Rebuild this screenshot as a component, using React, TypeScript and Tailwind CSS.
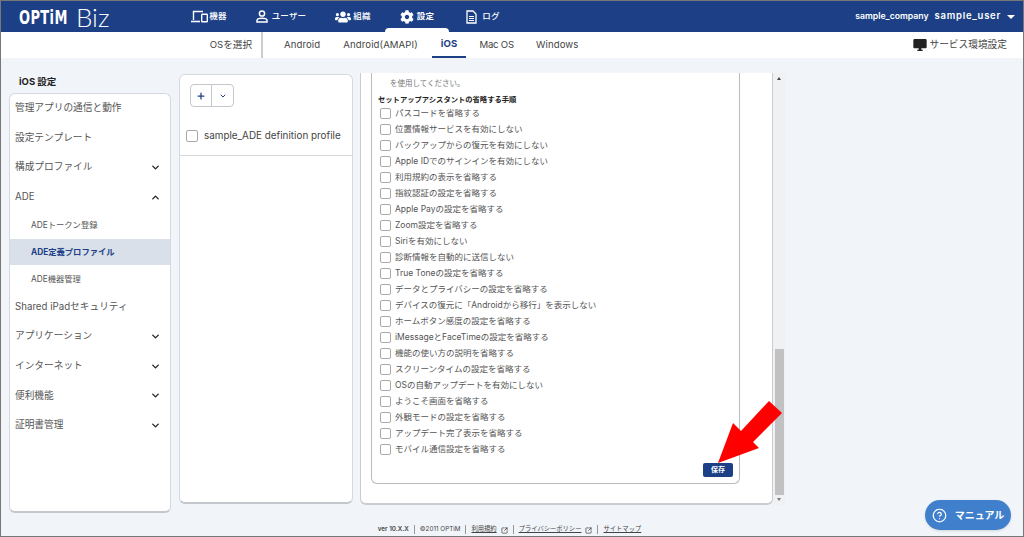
import { ChevronDown, ChevronUp, CircleHelp, Plus, SquareArrowOutUpRight } from 'lucide-react';
import { FaCog, FaUsers } from 'react-icons/fa';
import { MdDesktopWindows } from 'react-icons/md';

const font = '[font-family:Inter,"Noto_Sans_CJK_JP",sans-serif]';

function DeviceIcon() {
  return (
    <svg width="17" height="13" viewBox="0 0 17 13" fill="none" stroke="white">
      <path d="M2.5 10V1.5H12" strokeWidth="1.4" />
      <path d="M0 11.5H9" strokeWidth="1.6" />
      <rect x="10.7" y="4.2" width="5.6" height="7.6" rx="0.6" strokeWidth="1.4" />
    </svg>
  );
}

function UserIcon() {
  return (
    <svg width="12" height="13" viewBox="0 0 12 13" fill="none" stroke="white" strokeWidth="1.5">
      <circle cx="6" cy="3.5" r="2.6" />
      <path d="M1 12V10.5C1 9 2.5 8.3 6 8.3C9.5 8.3 11 9 11 10.5V12Z" />
    </svg>
  );
}

function LogIcon() {
  return (
    <svg width="11" height="14" viewBox="0 0 11 14" fill="none" stroke="white" strokeWidth="1.3">
      <path d="M1 1H7L10 4V13H1Z" />
      <path d="M3 6.5H8M3 8.5H8M3 10.5H8" strokeWidth="1" />
    </svg>
  );
}

function NavItem({ icon, label, active, className }: { icon: React.ReactNode; label: string; active?: boolean; className: string }) {
  return (
    <div className={`relative flex h-[31px] items-center justify-center ${className}`}>
      {icon}
      <span className={`text-[8.5px] tracking-[0.2px] text-white ${active ? 'font-bold' : 'font-medium'}`}>{label}</span>
      {active && <div className="absolute bottom-0 left-0 right-0 h-[4px] rounded-t-[4px] bg-white" />}
    </div>
  );
}

function Header() {
  return (
    <div className="flex h-[31px] shrink-0 items-center bg-[#1c3f86]">
      <div className="flex w-[176px] items-center pl-[18px]">
        <span className="w-[57px] origin-left scale-x-[0.65] text-[20px] font-bold leading-none tracking-[0.6px] text-white [font-family:'DejaVu_Sans']">OPTiM</span>
        <span className="text-[26px] font-light leading-none text-white [font-family:Lato,sans-serif]">Biz</span>
      </div>
      <NavItem className="w-[64px] gap-[1px]" icon={<DeviceIcon />} label="機器" />
      <NavItem className="w-[80px] gap-[4px]" icon={<UserIcon />} label="ユーザー" />
      <NavItem className="w-[64px] gap-[2px]" icon={<FaUsers className="h-[14px] w-[16px] text-white" />} label="組織" />
      <NavItem className="w-[64px] gap-[3px]" icon={<FaCog className="h-[14px] w-[14px] text-white" />} label="設定" active />
      <NavItem className="w-[68px] gap-[5px]" icon={<LogIcon />} label="ログ" />
      <div className="ml-auto flex items-center gap-[6px] pr-[8px] font-semibold text-white">
        <span className="text-[8.7px]">sample_company</span>
        <span className="text-[9.5px] tracking-[0.75px]">sample_user</span>
        <span className="h-0 w-0 border-x-[4px] border-t-[4px] border-x-transparent border-t-white" />
      </div>
    </div>
  );
}

function SubNav() {
  return (
    <div className="flex h-[26px] shrink-0 items-stretch bg-white text-[9.6px] text-[#444]">
      <div className="flex w-[260px] items-center justify-end pr-[9px]">OSを選択</div>
      <div className="w-[2px] bg-[#ccc]" />
      <div className="flex pl-[12px]">
        <div className="mr-[5px] flex items-center px-[9px] tracking-[0.1px]">Android</div>
        <div className="mr-[5px] flex items-center px-[9px] tracking-[0.1px]">Android(AMAPI)</div>
        <div className="mr-[4px] flex items-center border-b-2 border-[#1c3f86] px-[9px] font-bold tracking-[0.1px] text-[#1c3f86]">iOS</div>
        <div className="mr-[4px] flex items-center px-[9px] tracking-[-0.2px]">Mac OS</div>
        <div className="mr-[5px] flex items-center px-[9px] tracking-[0.1px]">Windows</div>
      </div>
      <div className="ml-auto flex items-center gap-[2px] pr-[16px]">
        <MdDesktopWindows className="h-[16px] w-[16px] text-[#222]" />
        <span className="text-[9.7px]">サービス環境設定</span>
      </div>
    </div>
  );
}

function SideRow({ label, open }: { label: string; open?: boolean }) {
  return (
    <div className="flex h-[29.6px] items-center justify-between pl-[5px] pr-[9px] text-[9.7px] text-[#555]">
      <span>{label}</span>
      {open === true && <ChevronUp className="h-[11px] w-[11px] text-[#222]" strokeWidth={3} />}
      {open === false && <ChevronDown className="h-[11px] w-[11px] text-[#222]" strokeWidth={3} />}
    </div>
  );
}

function SubRow({ label, active }: { label: string; active?: boolean }) {
  return (
    <div className={`flex h-[26.8px] items-center pl-[21px] text-[8.3px] ${active ? 'bg-[#d9e0ea] font-bold text-[#1c3f86]' : 'text-[#555]'}`}>
      {label}
    </div>
  );
}

function Sidebar() {
  return (
    <div className="flex w-[162px] shrink-0 flex-col">
      <div className="flex h-[34.5px] shrink-0 items-end pb-[3px] pl-[10px] text-[9.5px] font-bold text-[#222]">iOS 設定</div>
      <div className="h-[420px] shrink-0 rounded-[6px] border border-b-2 border-[#d5d8dd] border-b-[#c4c8cd] bg-white">
        <SideRow label="管理アプリの通信と動作" />
        <SideRow label="設定テンプレート" />
        <SideRow label="構成プロファイル" open={false} />
        <SideRow label="ADE" open />
        <SubRow label="ADEトークン登録" />
        <SubRow label="ADE定義プロファイル" active />
        <SubRow label="ADE機器管理" />
        <SideRow label="Shared iPadセキュリティ" />
        <SideRow label="アプリケーション" open={false} />
        <SideRow label="インターネット" open={false} />
        <SideRow label="便利機能" open={false} />
        <SideRow label="証明書管理" open={false} />
      </div>
    </div>
  );
}

function ProfileList() {
  return (
    <div className="ml-[8px] mt-[16px] h-[430px] w-[174px] shrink-0 rounded-[6px] border border-b-2 border-[#d5d8dd] border-b-[#c4c8cd] bg-white">
      <div className="flex h-[81px] flex-col justify-between border-b border-[#d5d8dd] pb-[12px] pl-[6px] pt-[9px]">
        <div className="ml-[4px] flex h-[23px] w-[44px] rounded-[4px] border border-[#c4c8cd]">
          <div className="flex w-[21px] items-center justify-center border-r border-[#c4c8cd]">
            <Plus className="h-[10px] w-[10px] text-[#1c3f86]" strokeWidth={3} />
          </div>
          <div className="flex flex-1 items-center justify-center">
            <ChevronDown className="h-[8px] w-[8px] text-[#1c3f86]" strokeWidth={3} />
          </div>
        </div>
        <div className="flex items-center gap-[6px]">
          <span className="h-[12px] w-[12px] rounded-[2px] border border-[#aaa]" />
          <span className="text-[9.9px] text-[#444]">sample_ADE definition profile</span>
        </div>
      </div>
    </div>
  );
}

const skipItems = [
  'パスコードを省略する',
  '位置情報サービスを有効にしない',
  'バックアップからの復元を有効にしない',
  'Apple IDでのサインインを有効にしない',
  '利用規約の表示を省略する',
  '指紋認証の設定を省略する',
  'Apple Payの設定を省略する',
  'Zoom設定を省略する',
  'Siriを有効にしない',
  '診断情報を自動的に送信しない',
  'True Toneの設定を省略する',
  'データとプライバシーの設定を省略する',
  'デバイスの復元に「Androidから移行」を表示しない',
  'ホームボタン感度の設定を省略する',
  'iMessageとFaceTimeの設定を省略する',
  '機能の使い方の説明を省略する',
  'スクリーンタイムの設定を省略する',
  'OSの自動アップデートを有効にしない',
  'ようこそ画面を省略する',
  '外観モードの設定を省略する',
  'アップデート完了表示を省略する',
  'モバイル通信設定を省略する',
];

function DetailPanel() {
  return (
    <div className="ml-[7px] mt-[15px] flex h-[432px] shrink-0">
      <div className="h-full w-[413px] rounded-b-[6px] border-x border-b-2 border-[#c9ccd1] bg-white pl-[10px] pr-[32px]">
        <div className="h-[411px] rounded-b-[6px] border-x border-b border-[#bbb] pl-[6px]">
          <div className="pl-[12px] pt-[6px] text-[7.5px] leading-[10px] text-[#777]">を使用してください。</div>
          <div className="mt-[6px] text-[7.3px] font-bold leading-[10px] text-[#222]">セットアップアシスタントの省略する手順</div>
          <div>
            {skipItems.map((item) => (
              <div key={item} className="flex h-[16px] items-center gap-[4px] pl-[2px] text-[8.5px] text-[#555]">
                <span className="h-[11px] w-[11px] shrink-0 rounded-[2px] border border-[#aaa]" />
                <span>{item}</span>
              </div>
            ))}
          </div>
          <div className="mr-[6px] mt-[6px] flex justify-end">
            <div className="flex h-[14px] w-[30px] items-center justify-center rounded-[2px] bg-[#1c3f86] text-[7px] font-bold text-white">保存</div>
          </div>
        </div>
      </div>
      <div className="flex h-full w-[12px] flex-col items-center justify-between bg-[#f0f1f3] py-[4px]">
        <span className="h-0 w-0 border-x-[2.5px] border-b-[3px] border-x-transparent border-b-[#444]" />
        <div className="mb-[3px] ml-[1px] mt-auto h-[146px] w-[9px] bg-[#c1c1c1]" />
        <span className="h-0 w-0 border-x-[2.5px] border-t-[3px] border-x-transparent border-t-[#777]" />
      </div>
    </div>
  );
}

function Footer() {
  return (
    <div className="flex flex-1 items-end justify-center pb-[2px] pr-[5px] text-[6.3px] text-[#444]">
      <span className="font-semibold">ver 10.X.X</span>
      <span className="mx-[5px] h-[9px] w-px bg-[#999]" />
      <span>©2011 OPTiM</span>
      <span className="mx-[5px] h-[9px] w-px bg-[#999]" />
      <span className="underline">利用規約</span>
      <SquareArrowOutUpRight className="ml-[4px] h-[7px] w-[7px]" strokeWidth={2.5} />
      <span className="mx-[5px] h-[9px] w-px bg-[#999]" />
      <span className="underline">プライバシーポリシー</span>
      <SquareArrowOutUpRight className="ml-[4px] h-[7px] w-[7px]" strokeWidth={2.5} />
      <span className="mx-[5px] h-[9px] w-px bg-[#999]" />
      <span className="underline">サイトマップ</span>
    </div>
  );
}

export default function App() {
  return (
    <div className={`relative flex h-[537px] w-[1024px] flex-col overflow-hidden border border-[#777] bg-[#f1f4f8] ${font}`}>
      <Header />
      <SubNav />
      <div className="flex h-[456px] shrink-0 pl-[8px]">
        <Sidebar />
        <ProfileList />
        <DetailPanel />
      </div>
      <Footer />

      {/* red callout arrow */}
      <svg className="absolute left-[-1px] top-[-1px]" width="1024" height="537" viewBox="0 0 1024 537">
        <polygon points="718,463 733,423 741,431 769,401 782,413 753,442 759,448" fill="#ff0000" />
      </svg>

      <div className="absolute bottom-[6px] right-[12px] flex h-[30px] w-[86px] items-center justify-center gap-[8px] rounded-full bg-[#3f7fcc] text-[10px] font-bold text-white shadow">
        <CircleHelp className="h-[15px] w-[15px]" strokeWidth={2} />
        <span>マニュアル</span>
      </div>
    </div>
  );
}
